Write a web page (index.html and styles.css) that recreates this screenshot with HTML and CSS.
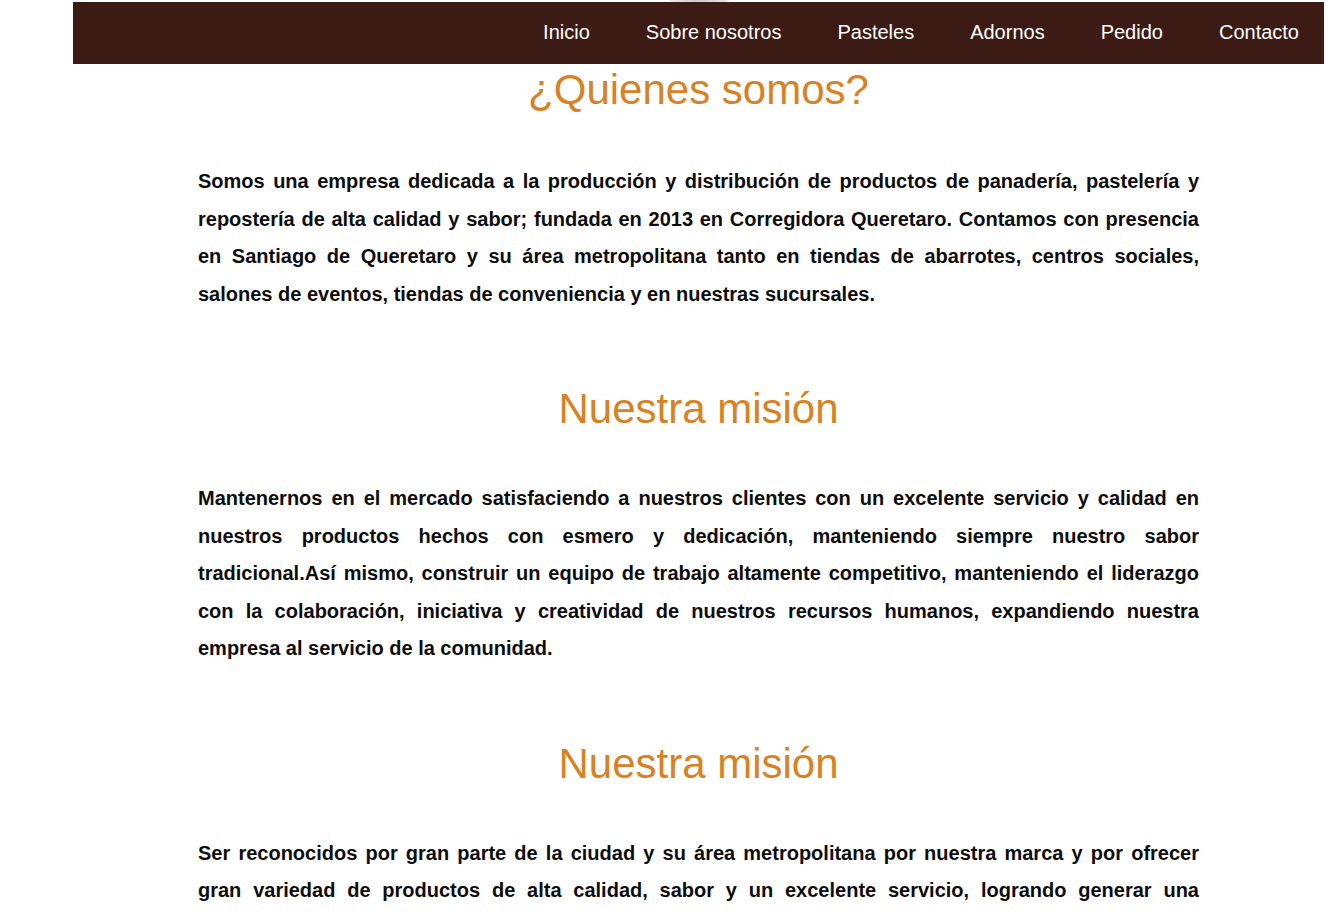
FILE: index.html
```html
<!DOCTYPE html>
<html lang="es">
<head>
<meta charset="utf-8">
<title>Sobre nosotros</title>
<link rel="stylesheet" href="styles.css">
</head>
<body>
<div class="peek"></div>
<div class="page">
  <nav class="nav">
    <a href="#">Inicio</a>
    <a href="#">Sobre nosotros</a>
    <a href="#">Pasteles</a>
    <a href="#">Adornos</a>
    <a href="#">Pedido</a>
    <a href="#">Contacto</a>
  </nav>
  <main class="content">
    <section class="block">
      <h2 class="title">¿Quienes somos?</h2>
      <p class="text">Somos una empresa dedicada a la producción y distribución de productos de panadería, pastelería y repostería de alta calidad y sabor; fundada en 2013 en Corregidora Queretaro. Contamos con presencia en Santiago de Queretaro y su área metropolitana tanto en tiendas de abarrotes, centros sociales, salones de eventos, tiendas de conveniencia y en nuestras sucursales.</p>
    </section>
    <section class="block">
      <h2 class="title">Nuestra misión</h2>
      <p class="text">Mantenernos en el mercado satisfaciendo a nuestros clientes con un excelente servicio y calidad en nuestros productos hechos con esmero y dedicación, manteniendo siempre nuestro sabor tradicional.Así mismo, construir un equipo de trabajo altamente competitivo, manteniendo el liderazgo con la colaboración, iniciativa y creatividad de nuestros recursos humanos, expandiendo nuestra empresa al servicio de la comunidad.</p>
    </section>
    <section class="block">
      <h2 class="title">Nuestra misión</h2>
      <p class="text">Ser reconocidos por gran parte de la ciudad y su área metropolitana por nuestra marca y por ofrecer gran variedad de productos de alta calidad, sabor y un excelente servicio, logrando generar una experiencia única en cada uno de nuestros clientes y consolidándonos como una de las mejores empresas del ramo.</p>
    </section>
  </main>
</div>
</body>
</html>
```

FILE: styles.css
```css
html, body {
  margin: 0;
  padding: 0;
  background: #ffffff;
  overflow: hidden;
}

body {
  font-family: "Liberation Sans", Arial, sans-serif;
  height: 912px;
}

.peek {
  position: absolute;
  top: -4px;
  left: 668px;
  width: 62px;
  height: 8px;
  border-radius: 50%;
  background: radial-gradient(ellipse at center, #c9c9c9 0%, #e4e4e4 60%, rgba(255,255,255,0) 100%);
  z-index: 0;
}

.page {
  margin-left: 73px;
  width: 1251px;
  padding-top: 2px;
  position: relative;
  z-index: 1;
}

.nav {
  height: 62px;
  box-sizing: border-box;
  padding-bottom: 2px;
  background: #3d1b15;
  display: flex;
  justify-content: flex-end;
  align-items: center;
}

.nav a {
  color: #ffffff;
  text-decoration: none;
  font-size: 20px;
  padding: 0 25px 0 28px;
  margin-left: 3px;
}

.nav a:first-child {
  margin-left: 0;
}

.content {
  padding: 0 125px;
}

.block {
  display: flex;
  flex-direction: column;
}

.title {
  margin: 0;
  text-align: center;
  color: #d98224;
  font-weight: normal;
  font-size: 42px;
  line-height: 52px;
}

.block + .block .title {
  margin-top: 70px;
}

.text {
  margin: 45px 0 0;
  text-align: justify;
  font-weight: bold;
  font-size: 20px;
  line-height: 37.5px;
  color: #0d0d0d;
}

.block:first-child .text {
  margin-top: 47px;
}
```
